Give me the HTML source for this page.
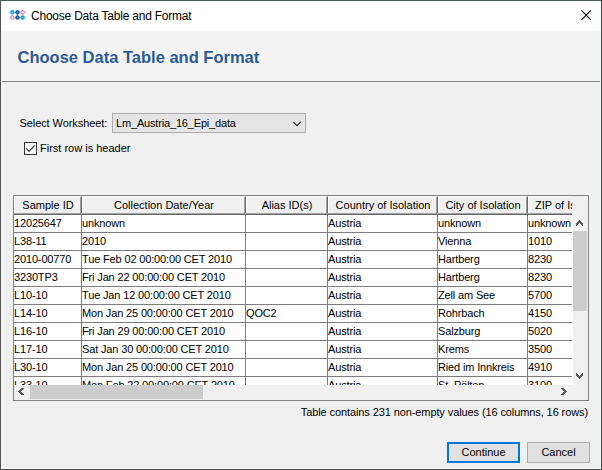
<!DOCTYPE html>
<html><head><meta charset="utf-8"><style>
*{box-sizing:border-box;margin:0;padding:0}
html,body{width:602px;height:470px;overflow:hidden;background:#f0f0f0}
body{position:relative;font-family:"Liberation Sans",sans-serif;color:#000}
.a{position:absolute}
.t{position:absolute;white-space:pre;line-height:13px}
</style></head><body>
<div class="a" style="left:0px;top:0px;width:602px;height:470px;background:#505050;border-top:1px solid #4b5858;border-right:1px solid #3e4b51"></div>
<div class="a" style="left:1px;top:1px;width:600px;height:468px;background:#fafafa;"></div>
<div class="a" style="left:1px;top:1px;width:600px;height:30px;background:#ffffff;"></div>
<div class="a" style="left:2px;top:31px;width:598px;height:437px;background:#f0f0f0;"></div>
<svg class="a" style="left:9px;top:9.3px" width="18" height="13" viewBox="0 0 18 13">
  <line x1="3.3" y1="3.3" x2="13.7" y2="3.3" stroke="#a9d3ee" stroke-width="1"/>
  <line x1="3.3" y1="8.5" x2="13.7" y2="8.5" stroke="#a9d3ee" stroke-width="1"/>
  <line x1="8.5" y1="3.3" x2="8.5" y2="8.5" stroke="#7f9fca" stroke-width="1"/>
  <circle cx="3.3" cy="3.3" r="2.2" fill="#1ba1e2"/>
  <circle cx="8.5" cy="3.3" r="2.2" fill="#1d5fa8"/>
  <circle cx="13.7" cy="3.3" r="1.75" fill="#fff" stroke="#e0509f" stroke-width="1"/>
  <circle cx="3.3" cy="8.5" r="1.75" fill="#fff" stroke="#e0509f" stroke-width="1"/>
  <circle cx="8.5" cy="8.5" r="2.2" fill="#1d5fa8"/>
  <circle cx="13.7" cy="8.5" r="2.2" fill="#1ba1e2"/>
  <circle cx="3.3" cy="3.3" r="0.6" fill="#9fd6f2"/>
  <circle cx="13.7" cy="8.5" r="0.6" fill="#9fd6f2"/>
  <circle cx="8.5" cy="3.3" r="0.6" fill="#7fa3d0"/>
  <circle cx="8.5" cy="8.5" r="0.6" fill="#7fa3d0"/>
</svg>
<div class="t" style="left:31px;top:10px;font-size:12px;letter-spacing:-0.22px">Choose Data Table and Format</div>
<svg class="a" style="left:580px;top:9px" width="13" height="13" viewBox="0 0 13 13">
  <path d="M1.4 1.4 L10.9 10.9 M10.9 1.4 L1.4 10.9" stroke="#111" stroke-width="1.1"/>
</svg>
<div class="a" style="left:2px;top:31px;width:598px;height:49px;background:#f4f4f4;"></div>
<div class="a" style="left:2px;top:80px;width:598px;height:1px;background:#fbfbfb;"></div>
<div class="a" style="left:2px;top:81px;width:598px;height:1px;background:#7b7b7b;"></div>
<div class="a" style="left:2px;top:82px;width:598px;height:1px;background:#f7f7f7;"></div>
<div class="t" style="left:17.5px;top:48px;font-size:16.5px;font-weight:bold;color:#2d5b98;line-height:19px">Choose Data Table and Format</div>
<div class="t" style="left:19.5px;top:117px;font-size:11px;letter-spacing:-0.08px">Select Worksheet:</div>
<div class="a" style="left:112px;top:113px;width:194px;height:20px;background:#e5e5e5;border:1px solid #adadad"></div>
<div class="t" style="left:116px;top:117px;font-size:11px;letter-spacing:-0.17px">Lm_Austria_16_Epi_data</div>
<svg class="a" style="left:291px;top:119px" width="12" height="9" viewBox="0 0 12 9">
  <path d="M2.3 3 L6 6.6 L9.7 3" fill="none" stroke="#333" stroke-width="1.2"/>
</svg>
<div class="a" style="left:24px;top:142px;width:13px;height:13px;background:#fff;border:1px solid #333"></div>
<svg class="a" style="left:24px;top:142px" width="13" height="13" viewBox="0 0 13 13">
  <path d="M2.3 6.3 L5 9.4 L10.7 3.3" fill="none" stroke="#333" stroke-width="1.2"/>
</svg>
<div class="t" style="left:40px;top:142px;font-size:11px;">First row is header</div>
<div class="a" style="left:13px;top:195px;width:576px;height:206px;background:#f0f0f0;border:1px solid #828282"></div>
<div class="a" style="left:14px;top:196px;width:559px;height:189px;overflow:hidden;background:#fff">
<div class="a" style="left:558px;top:0;width:1px;height:19px;background:#f0f0f0"></div>
<div class="a" style="left:0;top:0;width:558px;height:189px;overflow:hidden">
<div class="a" style="left:0px;top:0px;width:559px;height:19px;background:#f0f0f0;"></div>
<div class="a" style="left:0px;top:0px;width:68px;height:19px;background:#f0f0f0;border-top:1px solid #fff;border-left:1px solid #fff;border-right:1px solid #696969;border-bottom:1px solid #696969"></div>
<div class="a" style="left:66px;top:1px;width:1px;height:16px;background:#a0a0a0;"></div>
<div class="t" style="left:0px;top:3px;font-size:11px;width:68px;text-align:center">Sample ID</div>
<div class="a" style="left:68px;top:0px;width:164px;height:19px;background:#f0f0f0;border-top:1px solid #fff;border-left:1px solid #fff;border-right:1px solid #696969;border-bottom:1px solid #696969"></div>
<div class="a" style="left:230px;top:1px;width:1px;height:16px;background:#a0a0a0;"></div>
<div class="t" style="left:68px;top:3px;font-size:11px;width:164px;text-align:center">Collection Date/Year</div>
<div class="a" style="left:232px;top:0px;width:82px;height:19px;background:#f0f0f0;border-top:1px solid #fff;border-left:1px solid #fff;border-right:1px solid #696969;border-bottom:1px solid #696969"></div>
<div class="a" style="left:312px;top:1px;width:1px;height:16px;background:#a0a0a0;"></div>
<div class="t" style="left:232px;top:3px;font-size:11px;width:82px;text-align:center">Alias ID(s)</div>
<div class="a" style="left:314px;top:0px;width:110px;height:19px;background:#f0f0f0;border-top:1px solid #fff;border-left:1px solid #fff;border-right:1px solid #696969;border-bottom:1px solid #696969"></div>
<div class="a" style="left:422px;top:1px;width:1px;height:16px;background:#a0a0a0;"></div>
<div class="t" style="left:314px;top:3px;font-size:11px;width:110px;text-align:center">Country of Isolation</div>
<div class="a" style="left:424px;top:0px;width:90px;height:19px;background:#f0f0f0;border-top:1px solid #fff;border-left:1px solid #fff;border-right:1px solid #696969;border-bottom:1px solid #696969"></div>
<div class="a" style="left:512px;top:1px;width:1px;height:16px;background:#a0a0a0;"></div>
<div class="t" style="left:424px;top:3px;font-size:11px;width:90px;text-align:center">City of Isolation</div>
<div class="a" style="left:514px;top:0px;width:90px;height:19px;background:#f0f0f0;border-top:1px solid #fff;border-left:1px solid #fff;border-right:1px solid #696969;border-bottom:1px solid #696969"></div>
<div class="a" style="left:602px;top:1px;width:1px;height:16px;background:#a0a0a0;"></div>
<div class="t" style="left:521px;top:3px;font-size:11px;">ZIP of Isolation</div>
<div class="a" style="left:0px;top:17px;width:559px;height:1px;background:#a0a0a0;"></div>
<div class="a" style="left:0px;top:18px;width:559px;height:1px;background:#696969;"></div>
<div class="a" style="left:0px;top:36px;width:559px;height:1px;background:#7d7d7d;"></div>
<div class="t" style="left:0px;top:21px;font-size:11px;letter-spacing:-0.15px">12025647</div>
<div class="t" style="left:68px;top:21px;font-size:11px;letter-spacing:-0.15px">unknown</div>
<div class="t" style="left:314px;top:21px;font-size:11px;letter-spacing:-0.15px">Austria</div>
<div class="t" style="left:424px;top:21px;font-size:11px;letter-spacing:-0.15px">unknown</div>
<div class="t" style="left:514px;top:21px;font-size:11px;letter-spacing:-0.15px">unknown</div>
<div class="a" style="left:0px;top:54px;width:559px;height:1px;background:#7d7d7d;"></div>
<div class="t" style="left:0px;top:39px;font-size:11px;letter-spacing:-0.15px">L38-11</div>
<div class="t" style="left:68px;top:39px;font-size:11px;letter-spacing:-0.15px">2010</div>
<div class="t" style="left:314px;top:39px;font-size:11px;letter-spacing:-0.15px">Austria</div>
<div class="t" style="left:424px;top:39px;font-size:11px;letter-spacing:-0.15px">Vienna</div>
<div class="t" style="left:514px;top:39px;font-size:11px;letter-spacing:-0.15px">1010</div>
<div class="a" style="left:0px;top:72px;width:559px;height:1px;background:#7d7d7d;"></div>
<div class="t" style="left:0px;top:57px;font-size:11px;letter-spacing:-0.15px">2010-00770</div>
<div class="t" style="left:68px;top:57px;font-size:11px;letter-spacing:-0.15px">Tue Feb 02 00:00:00 CET 2010</div>
<div class="t" style="left:314px;top:57px;font-size:11px;letter-spacing:-0.15px">Austria</div>
<div class="t" style="left:424px;top:57px;font-size:11px;letter-spacing:-0.15px">Hartberg</div>
<div class="t" style="left:514px;top:57px;font-size:11px;letter-spacing:-0.15px">8230</div>
<div class="a" style="left:0px;top:90px;width:559px;height:1px;background:#7d7d7d;"></div>
<div class="t" style="left:0px;top:75px;font-size:11px;letter-spacing:-0.15px">3230TP3</div>
<div class="t" style="left:68px;top:75px;font-size:11px;letter-spacing:-0.15px">Fri Jan 22 00:00:00 CET 2010</div>
<div class="t" style="left:314px;top:75px;font-size:11px;letter-spacing:-0.15px">Austria</div>
<div class="t" style="left:424px;top:75px;font-size:11px;letter-spacing:-0.15px">Hartberg</div>
<div class="t" style="left:514px;top:75px;font-size:11px;letter-spacing:-0.15px">8230</div>
<div class="a" style="left:0px;top:108px;width:559px;height:1px;background:#7d7d7d;"></div>
<div class="t" style="left:0px;top:93px;font-size:11px;letter-spacing:-0.15px">L10-10</div>
<div class="t" style="left:68px;top:93px;font-size:11px;letter-spacing:-0.15px">Tue Jan 12 00:00:00 CET 2010</div>
<div class="t" style="left:314px;top:93px;font-size:11px;letter-spacing:-0.15px">Austria</div>
<div class="t" style="left:424px;top:93px;font-size:11px;letter-spacing:-0.15px">Zell am See</div>
<div class="t" style="left:514px;top:93px;font-size:11px;letter-spacing:-0.15px">5700</div>
<div class="a" style="left:0px;top:126px;width:559px;height:1px;background:#7d7d7d;"></div>
<div class="t" style="left:0px;top:111px;font-size:11px;letter-spacing:-0.15px">L14-10</div>
<div class="t" style="left:68px;top:111px;font-size:11px;letter-spacing:-0.15px">Mon Jan 25 00:00:00 CET 2010</div>
<div class="t" style="left:232px;top:111px;font-size:11px;letter-spacing:-0.15px">QOC2</div>
<div class="t" style="left:314px;top:111px;font-size:11px;letter-spacing:-0.15px">Austria</div>
<div class="t" style="left:424px;top:111px;font-size:11px;letter-spacing:-0.15px">Rohrbach</div>
<div class="t" style="left:514px;top:111px;font-size:11px;letter-spacing:-0.15px">4150</div>
<div class="a" style="left:0px;top:144px;width:559px;height:1px;background:#7d7d7d;"></div>
<div class="t" style="left:0px;top:129px;font-size:11px;letter-spacing:-0.15px">L16-10</div>
<div class="t" style="left:68px;top:129px;font-size:11px;letter-spacing:-0.15px">Fri Jan 29 00:00:00 CET 2010</div>
<div class="t" style="left:314px;top:129px;font-size:11px;letter-spacing:-0.15px">Austria</div>
<div class="t" style="left:424px;top:129px;font-size:11px;letter-spacing:-0.15px">Salzburg</div>
<div class="t" style="left:514px;top:129px;font-size:11px;letter-spacing:-0.15px">5020</div>
<div class="a" style="left:0px;top:162px;width:559px;height:1px;background:#7d7d7d;"></div>
<div class="t" style="left:0px;top:147px;font-size:11px;letter-spacing:-0.15px">L17-10</div>
<div class="t" style="left:68px;top:147px;font-size:11px;letter-spacing:-0.15px">Sat Jan 30 00:00:00 CET 2010</div>
<div class="t" style="left:314px;top:147px;font-size:11px;letter-spacing:-0.15px">Austria</div>
<div class="t" style="left:424px;top:147px;font-size:11px;letter-spacing:-0.15px">Krems</div>
<div class="t" style="left:514px;top:147px;font-size:11px;letter-spacing:-0.15px">3500</div>
<div class="a" style="left:0px;top:180px;width:559px;height:1px;background:#7d7d7d;"></div>
<div class="t" style="left:0px;top:165px;font-size:11px;letter-spacing:-0.15px">L30-10</div>
<div class="t" style="left:68px;top:165px;font-size:11px;letter-spacing:-0.15px">Mon Jan 25 00:00:00 CET 2010</div>
<div class="t" style="left:314px;top:165px;font-size:11px;letter-spacing:-0.15px">Austria</div>
<div class="t" style="left:424px;top:165px;font-size:11px;letter-spacing:-0.15px">Ried im Innkreis</div>
<div class="t" style="left:514px;top:165px;font-size:11px;letter-spacing:-0.15px">4910</div>
<div class="a" style="left:0px;top:198px;width:559px;height:1px;background:#7d7d7d;"></div>
<div class="t" style="left:0px;top:183px;font-size:11px;letter-spacing:-0.15px">L33-10</div>
<div class="t" style="left:68px;top:183px;font-size:11px;letter-spacing:-0.15px">Mon Feb 22 00:00:00 CET 2010</div>
<div class="t" style="left:314px;top:183px;font-size:11px;letter-spacing:-0.15px">Austria</div>
<div class="t" style="left:424px;top:183px;font-size:11px;letter-spacing:-0.15px">St. P&ouml;lten</div>
<div class="t" style="left:514px;top:183px;font-size:11px;letter-spacing:-0.15px">3100</div>
<div class="a" style="left:67px;top:19px;width:1px;height:170px;background:#7d7d7d;"></div>
<div class="a" style="left:231px;top:19px;width:1px;height:170px;background:#7d7d7d;"></div>
<div class="a" style="left:313px;top:19px;width:1px;height:170px;background:#7d7d7d;"></div>
<div class="a" style="left:423px;top:19px;width:1px;height:170px;background:#7d7d7d;"></div>
<div class="a" style="left:513px;top:19px;width:1px;height:170px;background:#7d7d7d;"></div>
<div class="a" style="left:603px;top:19px;width:1px;height:170px;background:#7d7d7d;"></div>
</div>
</div>
<div class="a" style="left:573px;top:196px;width:15px;height:189px;background:#f0f0f0;"></div>
<div class="a" style="left:573px;top:231px;width:14px;height:80px;background:#cdcdcd;"></div>
<svg class="a" style="left:576px;top:220px" width="7" height="6" fill="#5a5a5a" shape-rendering="crispEdges"><rect x="0" y="3" width="1" height="1"/><rect x="0" y="4" width="1" height="1"/><rect x="0" y="5" width="1" height="1"/><rect x="1" y="2" width="1" height="1"/><rect x="1" y="3" width="1" height="1"/><rect x="1" y="4" width="1" height="1"/><rect x="2" y="1" width="1" height="1"/><rect x="2" y="2" width="1" height="1"/><rect x="2" y="3" width="1" height="1"/><rect x="3" y="0" width="1" height="1"/><rect x="3" y="1" width="1" height="1"/><rect x="3" y="2" width="1" height="1"/><rect x="4" y="1" width="1" height="1"/><rect x="4" y="2" width="1" height="1"/><rect x="4" y="3" width="1" height="1"/><rect x="5" y="2" width="1" height="1"/><rect x="5" y="3" width="1" height="1"/><rect x="5" y="4" width="1" height="1"/><rect x="6" y="3" width="1" height="1"/><rect x="6" y="4" width="1" height="1"/><rect x="6" y="5" width="1" height="1"/></svg>
<svg class="a" style="left:576px;top:373px" width="7" height="6" fill="#5a5a5a" shape-rendering="crispEdges"><rect x="0" y="0" width="1" height="1"/><rect x="0" y="1" width="1" height="1"/><rect x="0" y="2" width="1" height="1"/><rect x="1" y="1" width="1" height="1"/><rect x="1" y="2" width="1" height="1"/><rect x="1" y="3" width="1" height="1"/><rect x="2" y="2" width="1" height="1"/><rect x="2" y="3" width="1" height="1"/><rect x="2" y="4" width="1" height="1"/><rect x="3" y="3" width="1" height="1"/><rect x="3" y="4" width="1" height="1"/><rect x="3" y="5" width="1" height="1"/><rect x="4" y="2" width="1" height="1"/><rect x="4" y="3" width="1" height="1"/><rect x="4" y="4" width="1" height="1"/><rect x="5" y="1" width="1" height="1"/><rect x="5" y="2" width="1" height="1"/><rect x="5" y="3" width="1" height="1"/><rect x="6" y="0" width="1" height="1"/><rect x="6" y="1" width="1" height="1"/><rect x="6" y="2" width="1" height="1"/></svg>
<div class="a" style="left:14px;top:385px;width:559px;height:15px;background:#f0f0f0;"></div>
<div class="a" style="left:30px;top:385px;width:173px;height:14px;background:#cdcdcd;"></div>
<svg class="a" style="left:14px;top:385px" width="16" height="15" viewBox="0 0 16 15">
  <path d="M7 3 L10 3 L6.5 6.5 L10 10 L7 10 L3.5 6.5Z" fill="#5a5a5a" shape-rendering="crispEdges"/>
</svg>
<svg class="a" style="left:557px;top:385px" width="16" height="15" viewBox="0 0 16 15">
  <path d="M3 3 L6 3 L9.5 6.5 L6 10 L3 10 L6.5 6.5Z" fill="#5a5a5a" shape-rendering="crispEdges"/>
</svg>
<div class="t" style="left:288px;top:406px;font-size:11px;width:300px;text-align:right;letter-spacing:-0.1px">Table contains 231 non-empty values (16 columns, 16 rows)</div>
<div class="a" style="left:447px;top:442px;width:73px;height:21px;background:#e1e1e1;border:2px solid #0078d7"></div>
<div class="t" style="left:447px;top:446px;font-size:11px;width:73px;text-align:center">Continue</div>
<div class="a" style="left:527px;top:442px;width:63px;height:21px;background:#e1e1e1;border:1px solid #adadad"></div>
<div class="t" style="left:527px;top:446px;font-size:11px;width:63px;text-align:center">Cancel</div>
</body></html>
